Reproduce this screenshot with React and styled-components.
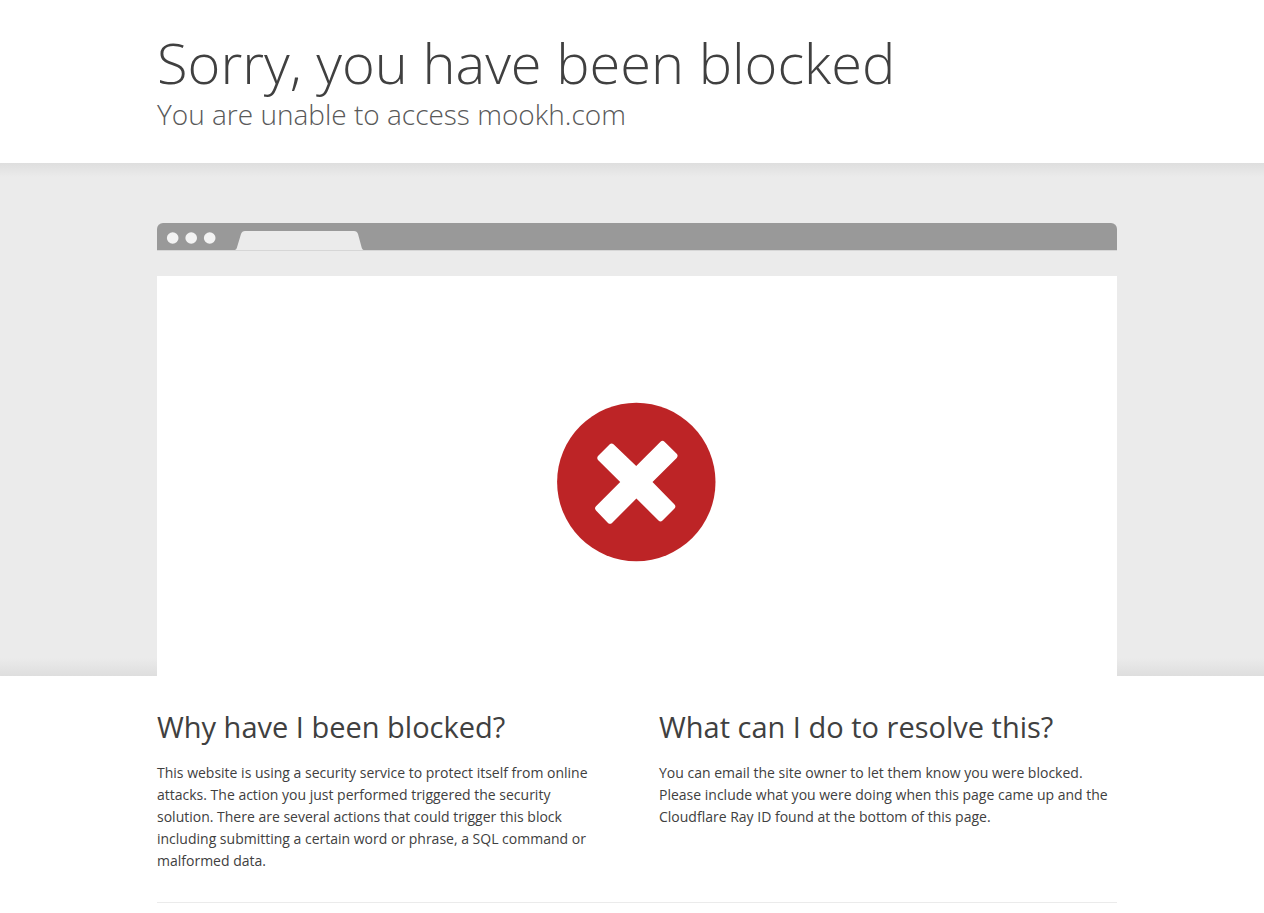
import React from "react";
import styled, { createGlobalStyle } from "styled-components";

const Global = createGlobalStyle`
  body {
    margin: 0;
    background: #fff;
    color: #404040;
    font-family: "Segoe UI", "Open Sans", "Noto Sans", sans-serif;
    font-size: 14px;
  }
  h1, h2, p { margin: 0; }
`;

const Wrapper = styled.div`
  width: calc(100% - 40px);
  max-width: 960px;
  margin: 0 auto;
  padding-left: 10px;
`;

const Header = styled.header`
  padding: 28px 0 31px;
`;

const Title = styled.h1`
  font-size: 56px;
  line-height: 68px;
  font-weight: 300;
`;

const Subtitle = styled.h2`
  font-size: 28px;
  line-height: 36px;
  font-weight: 300;
  color: #595959;
`;

const Band = styled.section`
  background: linear-gradient(
    to bottom,
    #dedede,
    #ebebeb 14px,
    #ebebeb calc(100% - 18px),
    #dedede
  );
  padding-top: 60px;
`;

const BrowserBar = styled.svg`
  display: block;
  width: 100%;
  height: 28px;
`;

const Screen = styled.div`
  box-sizing: border-box;
  margin-top: 25px;
  padding-top: 12px;
  height: 400px;
  background: #fff;
  display: flex;
  align-items: center;
  justify-content: center;
`;

const Columns = styled.div`
  display: grid;
  grid-template-columns: 442fr 458fr;
  gap: 60px;
  padding: 32px 0 30px;
  border-bottom: 1px solid #ebebeb;

  @media (max-width: 720px) {
    grid-template-columns: 1fr;
    gap: 30px;
  }
`;

const Heading = styled.h2`
  font-size: 29px;
  line-height: 38px;
  font-weight: 400;
`;

const Text = styled.p`
  margin-top: 16px;
  line-height: 22px;
`;

export default function App() {
  return (
    <>
      <Global />
      <Header>
        <Wrapper>
          <Title>Sorry, you have been blocked</Title>
          <Subtitle>You are unable to access mookh.com</Subtitle>
        </Wrapper>
      </Header>
      <Band>
        <Wrapper>
          <BrowserBar aria-hidden="true">
            <rect width="100%" height="34" rx="6" fill="#999" />
            <rect y="27" width="100%" height="1" fill="#d6d6d6" />
            <circle cx="15.7" cy="15" r="5.8" fill="#f3f3f3" />
            <circle cx="34.2" cy="15" r="5.8" fill="#f3f3f3" />
            <circle cx="52.7" cy="15" r="5.8" fill="#f3f3f3" />
            <path d="M78 27Q79.300 26.500 79.800 25L84 11Q85 8 88 8H197Q200 8 201 11L204.800 25Q205.300 26.500 206.500 27Z" fill="#ebebeb" />
          </BrowserBar>
          <Screen>
            <svg width="160" height="160" viewBox="0 0 160 160" role="img" aria-label="Blocked">
              <circle cx="79.300" cy="80" r="79.200" fill="#bd2426" />
              <path
                d="M41 58Q39.500 56 41 54L52.500 42.500Q54.500 40.500 56.500 42.200L79.200 64L103.500 39.700Q105.500 38 107.500 39.700L119.700 51.800Q121.500 53.800 119.700 56L95.500 80L117.500 102.500Q119.300 104.500 117.500 106.500L105.500 118.500Q103.500 120.300 101.500 118.500L79.400 96.500L55 121Q53 122.700 51 121L39 108.500Q37 106.300 39 104.300L63.200 80Z"
                fill="#fff"
              />
            </svg>
          </Screen>
        </Wrapper>
      </Band>
      <main>
        <Wrapper>
          <Columns>
            <section>
              <Heading>Why have I been blocked?</Heading>
              <Text>
                This website is using a security service to protect itself from online attacks. The
                action you just performed triggered the security solution. There are several actions
                that could trigger this block including submitting a certain word or phrase, a SQL
                command or malformed data.
              </Text>
            </section>
            <section>
              <Heading>What can I do to resolve this?</Heading>
              <Text>
                You can email the site owner to let them know you were blocked. Please include what
                you were doing when this page came up and the Cloudflare Ray ID found at the bottom
                of this page.
              </Text>
            </section>
          </Columns>
        </Wrapper>
      </main>
    </>
  );
}
